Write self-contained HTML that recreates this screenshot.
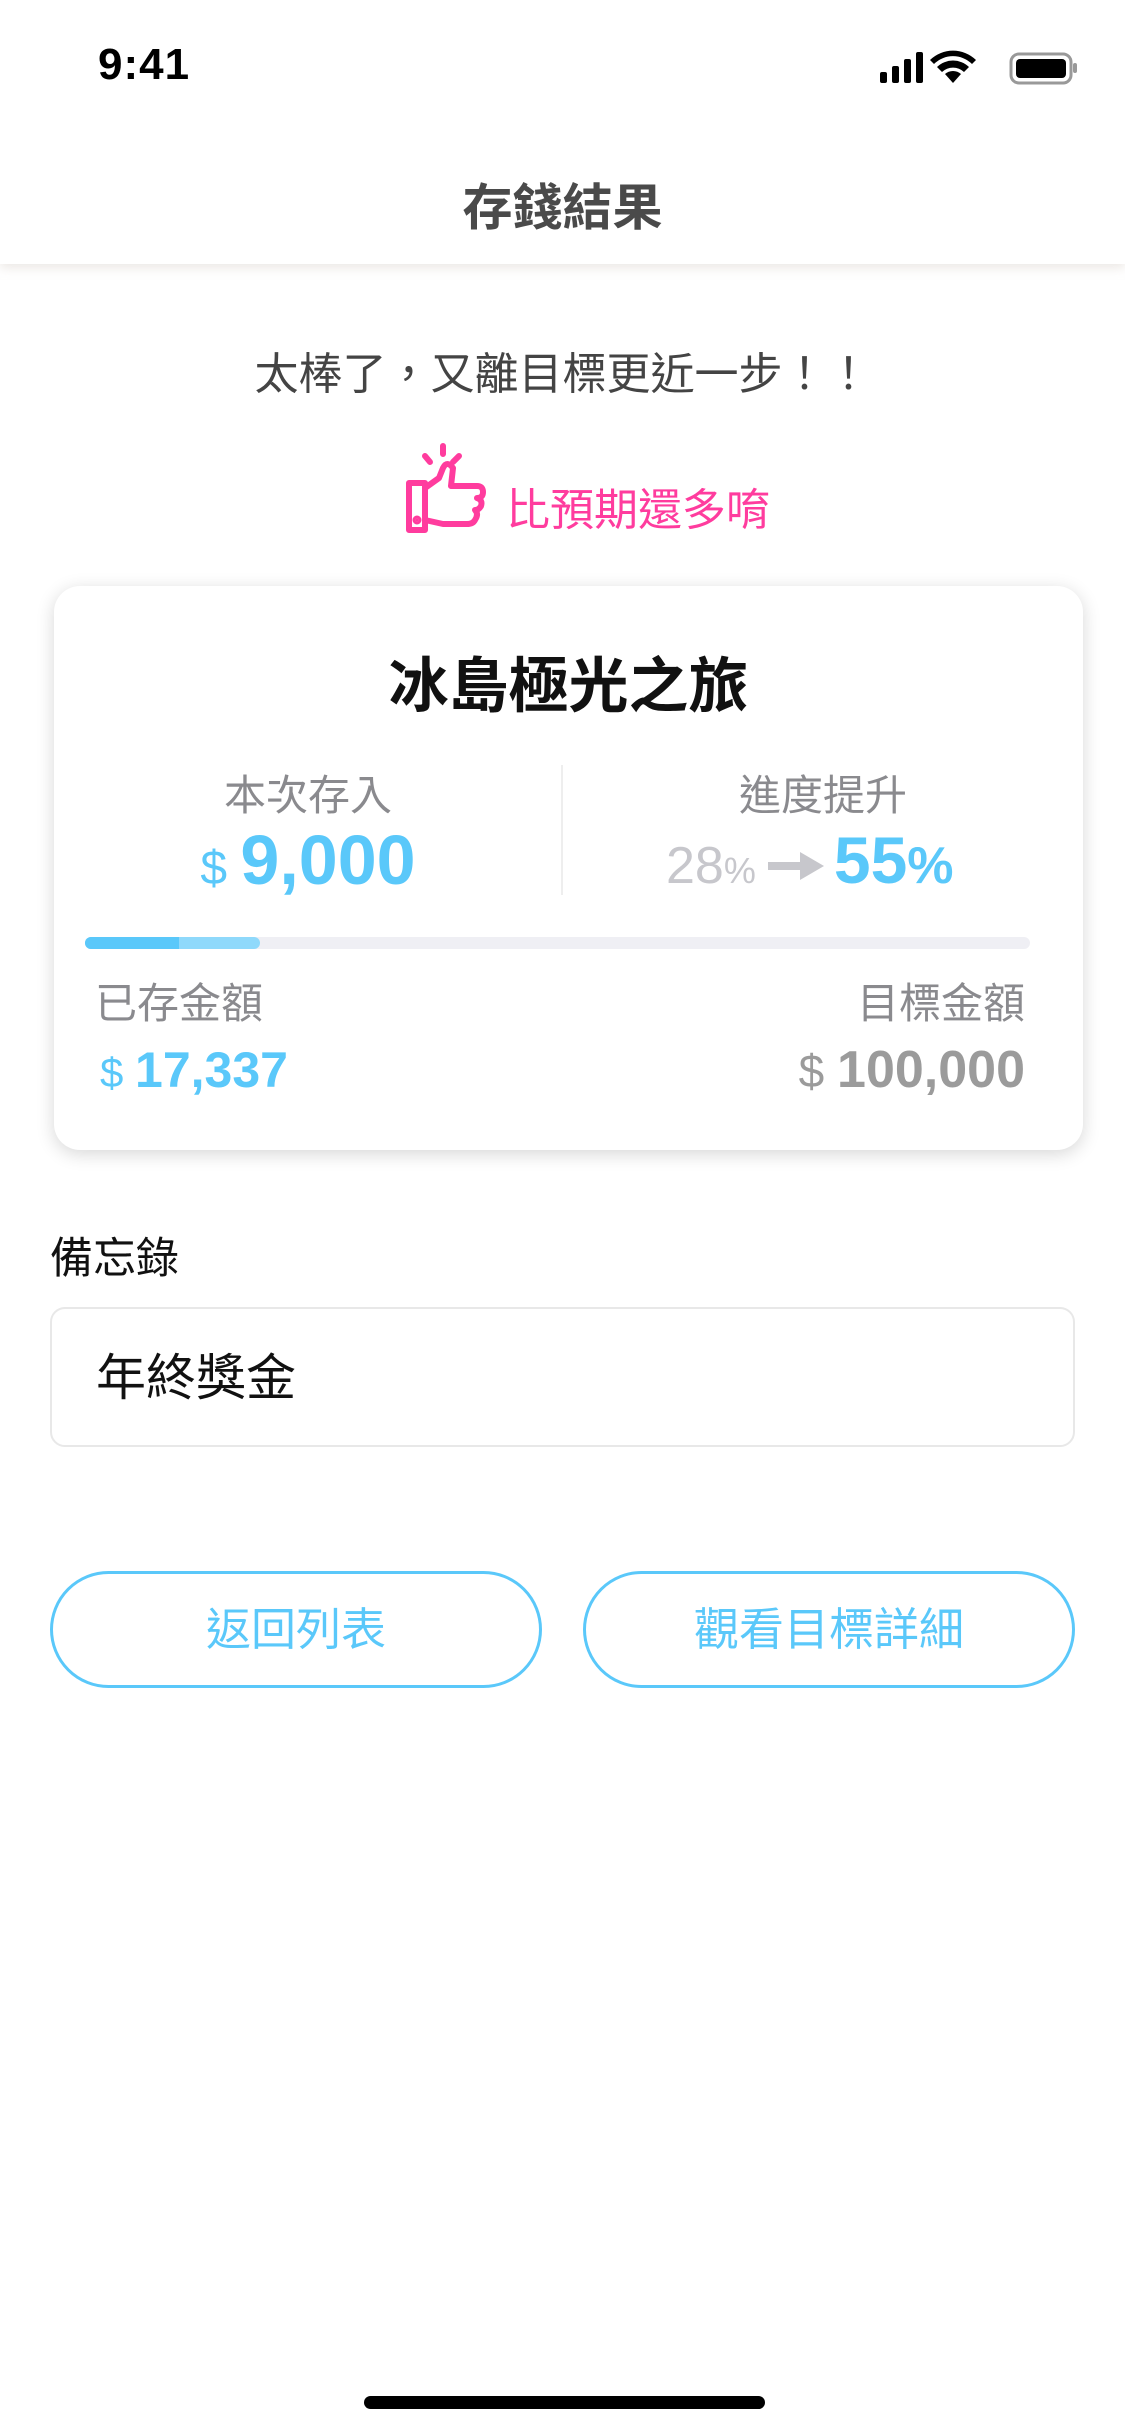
<!DOCTYPE html>
<html><head><meta charset="utf-8"><style>
*{margin:0;padding:0;box-sizing:border-box}
body{width:1125px;height:2436px;background:#fff;position:relative;overflow:hidden;font-family:"Liberation Sans","Noto Sans CJK TC",sans-serif}
.a{position:absolute}
.c{text-align:center}
.nav{left:0;top:0;width:1125px;height:264px;background:#fff;box-shadow:0 4px 10px rgba(200,190,180,.35)}
.card{left:54px;top:586px;width:1029px;height:564px;background:#fff;border-radius:26px;box-shadow:0 4px 18px rgba(0,0,0,.16)}
.blue{color:#5ac8fa}
.grey{color:#8a8a8e}
.btn{top:1571px;width:492px;height:117px;border:3px solid #5ac8fa;border-radius:60px;color:#5ac8fa;font-size:45px;line-height:111px;text-align:center}
</style></head><body>
<div class="a nav"></div>
<div class="a" style="left:98px;top:40px;font-size:44px;font-weight:bold;letter-spacing:1px">9:41</div>
<svg class="a" style="left:878px;top:50px" width="200" height="36" viewBox="0 0 200 36">
<rect x="2" y="22" width="7" height="11" rx="2"/><rect x="14" y="16" width="7" height="17" rx="2"/><rect x="26" y="9" width="7" height="24" rx="2"/><rect x="38" y="2" width="7" height="31" rx="2"/>
<path d="M75 33 L67 24 A12 12 0 0 1 83 24 Z"/><path d="M59 17 A23 23 0 0 1 91 17 L86 22 A16 16 0 0 0 64 22 Z"/><path d="M52 10 A33 33 0 0 1 98 10 L94 14 A27 27 0 0 0 56 14 Z"/>
<rect x="133" y="4" width="60" height="29" rx="8" fill="none" stroke="#999" stroke-width="3"/><rect x="138" y="9" width="50" height="19" rx="4"/><rect x="195" y="13" width="4" height="10" rx="2" fill="#999"/>
</svg>
<div class="a c" style="left:0;width:1125px;top:168px;font-size:50px;font-weight:bold;color:#4a4a4a">存錢結果</div>
<div class="a c" style="left:0;width:1125px;top:338px;font-size:44px;color:#444">太棒了，又離目標更近一步！！</div>
<svg class="a" style="left:405px;top:440px" width="84" height="94" viewBox="0 0 84 94" fill="none" stroke="#ff3c9e" stroke-width="6" stroke-linecap="round" stroke-linejoin="round">
<path d="M38 6 V14 M20 16 L25 22 M54 16 L48 22"/>
<path d="M4 43 H20 V90 H4 Z"/>
<path d="M20 48 L34 38 L38 28 Q42 20 48 28 L46 46 H72 Q78 46 78 52 Q78 58 72 58 Q78 60 76 66 Q74 70 70 70 Q74 74 70 80 Q68 84 62 84 H38 L20 80"/>
<circle cx="12" cy="80" r="1.5" fill="#ff3c9e"/>
</svg>
<div class="a" style="left:506px;top:474px;font-size:44px;color:#ff3c9e">比預期還多唷</div>
<div class="a card"></div>
<div class="a c" style="left:54px;width:1029px;top:638px;font-size:60px;font-weight:bold;color:#111">冰島極光之旅</div>
<div class="a" style="left:561px;top:765px;width:2px;height:130px;background:#eee"></div>
<div class="a c grey" style="left:54px;width:508px;top:762px;font-size:42px">本次存入</div>
<div class="a c blue" style="left:54px;width:508px;top:820px;font-size:70px;font-weight:bold;line-height:80px"><span style="font-size:48px;font-weight:normal">$ </span>9,000</div>
<div class="a c grey" style="left:563px;width:520px;top:762px;font-size:42px">進度提升</div>
<div class="a" style="left:666px;top:820px;line-height:80px;white-space:nowrap"><span style="font-size:52px;color:#c7c7cc">28</span><span style="font-size:36px;color:#c7c7cc">%</span><svg width="66" height="34" style="margin:0 6px" viewBox="0 0 66 34"><path d="M6 17 H40" stroke="#c7c7cc" stroke-width="8"/><path d="M38 3 L62 17 L38 31 Z" fill="#c7c7cc"/></svg><span style="font-size:66px;font-weight:bold;color:#5ac8fa">55</span><span style="font-size:52px;font-weight:bold;color:#5ac8fa">%</span></div>
<div class="a" style="left:85px;top:937px;width:945px;height:12px;border-radius:6px;background:#efeff4"></div>
<div class="a" style="left:85px;top:937px;width:175px;height:12px;border-radius:6px;background:#8fd9fb"></div>
<div class="a" style="left:85px;top:937px;width:94px;height:12px;border-radius:6px 0 0 6px;background:#5ac8fa"></div>
<div class="a grey" style="left:95px;top:970px;font-size:42px">已存金額</div>
<div class="a blue" style="left:100px;top:1040px;font-size:50px;font-weight:bold;line-height:60px"><span style="font-size:42px;font-weight:normal">$ </span>17,337</div>
<div class="a grey" style="right:100px;top:970px;font-size:42px">目標金額</div>
<div class="a" style="right:100px;top:1040px;font-size:52px;font-weight:bold;line-height:60px;color:#9b9b9b"><span style="font-size:46px;font-weight:normal">$ </span>100,000</div>
<div class="a" style="left:50px;top:1224px;font-size:43px;color:#111">備忘錄</div>
<div class="a" style="left:50px;top:1307px;width:1025px;height:140px;border:2px solid #e8e8e8;border-radius:15px"></div>
<div class="a" style="left:96px;top:1338px;font-size:50px;color:#111">年終獎金</div>
<div class="a btn" style="left:50px">返回列表</div>
<div class="a btn" style="left:583px">觀看目標詳細</div>
<div class="a" style="left:364px;top:2396px;width:401px;height:13px;border-radius:7px;background:#000"></div>
</body></html>
